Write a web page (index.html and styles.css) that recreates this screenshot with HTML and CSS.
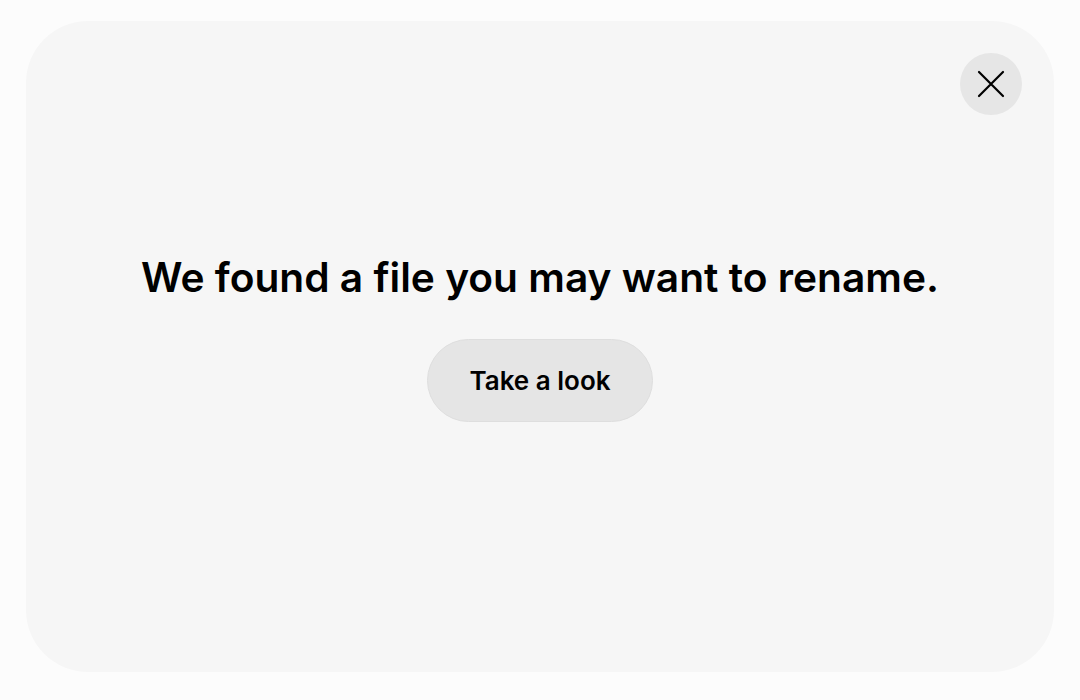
FILE: index.html
```html
<!DOCTYPE html>
<html lang="en">
<head>
<meta charset="utf-8">
<title>Rename suggestion</title>
<link rel="stylesheet" href="styles.css">
</head>
<body>
<div class="card">
  <button class="close" aria-label="Close">
    <svg width="28" height="28" viewBox="0 0 28 28"><path d="M2 2 L26 26 M26 2 L2 26" stroke="#000" stroke-width="2.2" stroke-linecap="round" fill="none"/></svg>
  </button>
  <div class="content">
    <h1 class="title">We found a file you may want to rename.</h1>
    <button class="action">Take a look</button>
  </div>
</div>
</body>
</html>
```
FILE: styles.css
```css
html, body {
  margin: 0;
  height: 100%;
}
body {
  background: #fcfcfc;
  padding: 21px 26px 28px 26px;
  box-sizing: border-box;
  font-family: Inter, "Noto Sans", sans-serif;
}
.card {
  position: relative;
  height: 100%;
  background: #f6f6f6;
  border-radius: 62px;
  display: flex;
  align-items: center;
  justify-content: center;
}
.close {
  position: absolute;
  top: 32px;
  right: 32px;
  width: 62px;
  height: 62px;
  border-radius: 50%;
  border: none;
  background: #e6e6e6;
  display: flex;
  align-items: center;
  justify-content: center;
  padding: 0;
}
.content {
  display: flex;
  flex-direction: column;
  align-items: center;
  margin-top: -17px;
}
.title {
  margin: 0;
  font-size: 40.7px;
  font-weight: 600;
  color: #000;
  line-height: 48px;
}
.action {
  margin-top: 37px;
  width: 226px;
  height: 83px;
  border-radius: 42px;
  border: 1px solid #dedede;
  background: #e5e5e5;
  font-family: Inter, "Noto Sans", sans-serif;
  font-size: 26px;
  font-weight: 600;
  color: #000;
  padding: 0;
}
```
